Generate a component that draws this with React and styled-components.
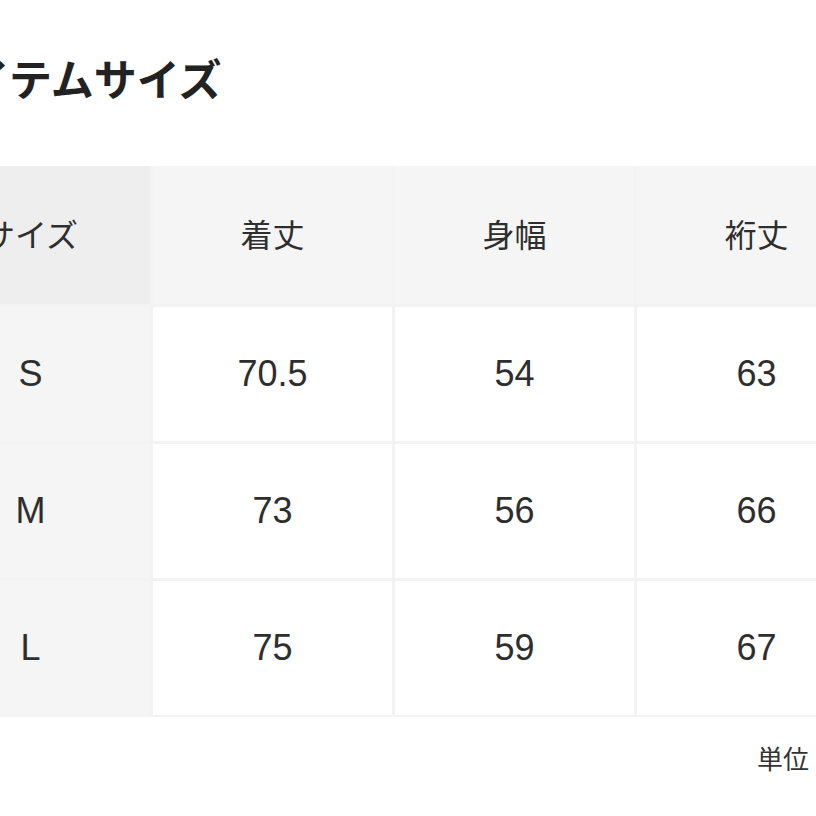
import React from "react";
import styled, { createGlobalStyle } from "styled-components";

const GlobalStyle = createGlobalStyle`
  html, body {
    margin: 0;
    padding: 0;
    background: #ffffff;
    overflow: hidden;
  }
  body {
    font-family: "Liberation Sans", "Noto Sans CJK JP", sans-serif;
    color: #333333;
  }
`;

const Page = styled.div`
  width: 816px;
  height: 816px;
  overflow: hidden;
  display: flex;
  flex-direction: column;
`;

const Title = styled.h2`
  margin: 51px 0 0 -74px;
  height: 52px;
  line-height: 52px;
  font-family: "Noto Sans CJK JP", sans-serif;
  font-size: 43px;
  font-weight: 700;
  color: #222222;
  white-space: nowrap;
`;

const Table = styled.div`
  margin: 63px 0 0 -89px;
  width: 966px;
  display: grid;
  grid-template-columns: repeat(4, 239px);
  grid-template-rows: 138px repeat(3, 134px);
  gap: 3px;
  background: #f3f3f3;
  border-bottom: 2px solid #f3f3f3;
`;

const Cell = styled.div`
  display: flex;
  align-items: center;
  justify-content: center;
  padding-bottom: ${(p) => (p.$head ? "4px" : "0")};
  background: ${(p) =>
    p.$head ? (p.$first ? "#eeeeee" : "#f5f5f5") : p.$first ? "#f5f5f5" : "#ffffff"};
  font-size: ${(p) => (p.$head ? "32px" : "36px")};
  color: #2e2e2e;
  white-space: nowrap;
`;

const Note = styled.div`
  display: flex;
  justify-content: flex-end;
  padding: 22px 7px 0 0;
  font-family: "Noto Sans CJK JP", sans-serif;
  font-size: 26px;
  color: #333333;
`;

const headers = ["サイズ", "着丈", "身幅", "裄丈"];
const rows = [
  ["S", "70.5", "54", "63"],
  ["M", "73", "56", "66"],
  ["L", "75", "59", "67"],
];

export default function App() {
  return (
    <Page>
      <GlobalStyle />
      <Title>アイテムサイズ</Title>
      <Table>
        {headers.map((h, i) => (
          <Cell key={h} $head $first={i === 0}>
            {h}
          </Cell>
        ))}
        {rows.map((r) =>
          r.map((v, i) => (
            <Cell key={r[0] + i} $first={i === 0}>
              {v}
            </Cell>
          ))
        )}
      </Table>
      <Note>単位</Note>
    </Page>
  );
}
